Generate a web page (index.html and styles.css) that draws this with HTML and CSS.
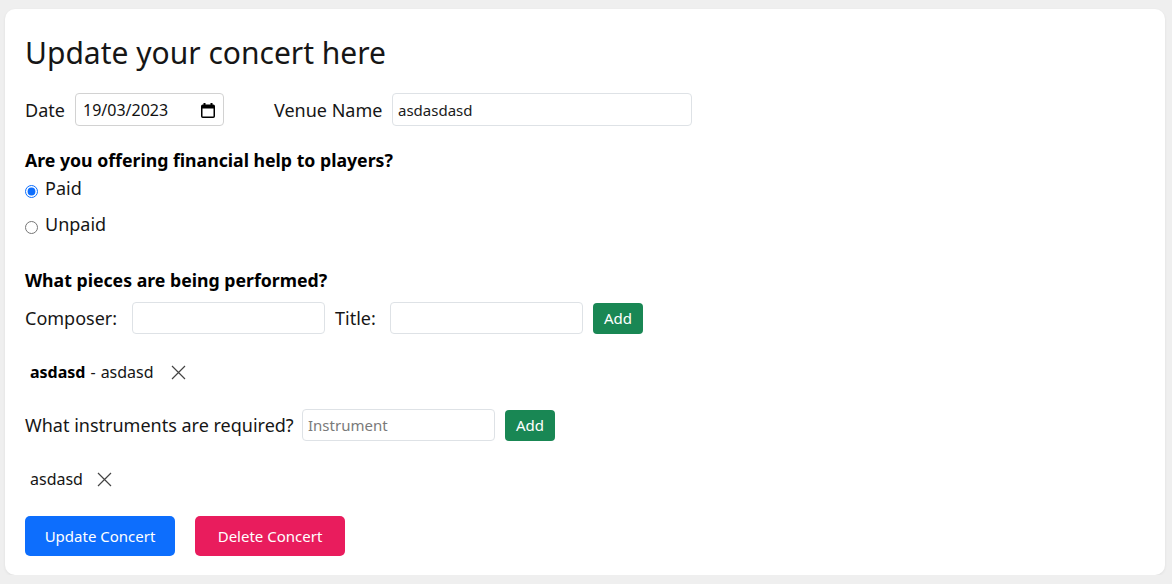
FILE: index.html
```html
<!DOCTYPE html>
<html lang="en">
<head>
<meta charset="utf-8">
<title>Update concert</title>
<link rel="stylesheet" href="styles.css">
</head>
<body>
<div class="card">
  <h2 class="title">Update your concert here</h2>
  <div class="row row-top">
    <label class="lbl lbl-date">Date</label>
    <div class="date-field">
      <input class="date-text" type="text" value="19/03/2023">
      <svg class="cal" width="14" height="15" viewBox="0 0 14 15" aria-hidden="true">
        <rect x="2.5" y="0" width="2" height="3" fill="#000"/>
        <rect x="9.5" y="0" width="2" height="3" fill="#000"/>
        <rect x="0.75" y="2.25" width="12.5" height="12" rx="1" fill="none" stroke="#000" stroke-width="1.5"/>
        <rect x="1" y="2.5" width="12" height="3" fill="#000"/>
      </svg>
    </div>
    <label class="lbl lbl-venue">Venue Name</label>
    <input class="field venue" type="text" value="asdasdasd">
  </div>

  <h5 class="q q1">Are you offering financial help to players?</h5>
  <label class="radio r1"><input type="radio" name="pay" checked><span>Paid</span></label>
  <label class="radio r2"><input type="radio" name="pay"><span>Unpaid</span></label>

  <h5 class="q q2">What pieces are being performed?</h5>
  <div class="row row-piece">
    <label class="lbl lbl-composer">Composer:</label>
    <input class="field w193" type="text">
    <label class="lbl lbl-title">Title:</label>
    <input class="field w193" type="text">
    <button class="btn-add">Add</button>
  </div>

  <div class="item item-piece">
    <span><b>asdasd</b><span class="sep">-</span>asdasd</span>
    <svg class="x" width="15" height="15" viewBox="0 0 15 15" aria-hidden="true"><path d="M1 1L14 14M14 1L1 14" stroke="#444" stroke-width="1.2" fill="none"/></svg>
  </div>

  <div class="row row-inst">
    <label class="lbl lbl-inst">What instruments are required?</label>
    <input class="field w193" type="text" placeholder="Instrument">
    <button class="btn-add">Add</button>
  </div>

  <div class="item item-inst">
    <span>asdasd</span>
    <svg class="x" width="15" height="15" viewBox="0 0 15 15" aria-hidden="true"><path d="M1 1L14 14M14 1L1 14" stroke="#444" stroke-width="1.2" fill="none"/></svg>
  </div>

  <div class="actions">
    <button class="btn btn-update">Update Concert</button>
    <button class="btn btn-delete">Delete Concert</button>
  </div>
</div>
</body>
</html>
```

FILE: styles.css
```css
html, body {
  margin: 0;
  padding: 0;
}
body {
  background: #efefef;
  font-family: "Noto Sans", "Open Sans", sans-serif;
  color: #161616;
}
.card {
  margin: 9px 0 0 5px;
  width: 1160px;
  height: 566px;
  box-sizing: border-box;
  padding: 26px 20px 0;
  background: #fff;
  border-radius: 10px;
  box-shadow: 0 1px 3px rgba(0, 0, 0, 0.07);
  display: flex;
  flex-direction: column;
  align-items: flex-start;
}
.title {
  margin: 0;
  font-size: 30px;
  font-weight: 400;
  line-height: 36px;
}
.row {
  display: flex;
  align-items: center;
}
.lbl {
  font-size: 18px;
  line-height: 24px;
  flex: none;
}
.row-top {
  margin-top: 22px;
  height: 33px;
}
.lbl-date { width: 50px; }
.date-field {
  width: 149px;
  height: 33px;
  box-sizing: border-box;
  border: 1px solid #d2d2d2;
  border-radius: 4px;
  display: flex;
  align-items: center;
  justify-content: space-between;
  padding: 0 8px 0 7px;
  margin-right: 50px;
}
.date-text {
  border: none;
  outline: none;
  padding: 0;
  width: 100px;
  font-family: inherit;
  font-size: 16px;
  color: #111;
  background: transparent;
}
.cal { flex: none; margin-top: 1px; }
.lbl-venue { width: 118px; }
.field {
  height: 33px;
  box-sizing: border-box;
  border: 1px solid #dee2e6;
  border-radius: 4px;
  padding: 0 5px;
  font-family: inherit;
  font-size: 15px;
  color: #1a1a1a;
  background: #fff;
  outline: none;
}
.field::placeholder { color: #7a7a7a; }
.venue { width: 300px; }
.q {
  margin: 0;
  font-size: 17.7px;
  font-weight: 700;
  line-height: 22px;
  color: #000;
}
.q1 { margin-top: 23px; }
.radio {
  display: flex;
  align-items: flex-start;
  font-size: 18px;
  line-height: 24px;
  height: 24px;
}
.radio input {
  margin: 9px 7px 0 0;
  width: 13px;
  height: 13px;
  accent-color: #0d6efd;
}
.r1 { margin-top: 5px; }
.r2 { margin-top: 12px; }
.q2 { margin-top: 33px; }
.row-piece {
  margin-top: 11px;
  height: 32px;
}
.lbl-composer { width: 107px; }
.w193 { width: 193px; height: 32px; }
.lbl-title { width: 55px; margin-left: 10px; }
.btn-add {
  margin-left: 10px;
  width: 50px;
  height: 31px;
  border: none;
  border-radius: 4px;
  background: #198754;
  color: #fff;
  font-family: inherit;
  font-size: 15px;
  padding: 0;
}
.item {
  display: flex;
  align-items: center;
  font-size: 16px;
  line-height: 24px;
  padding-left: 5px;
}
.item b { font-weight: 700; color: #000; }
.sep { margin: 0 5px; }
.x { margin-left: 14px; flex: none; }
.item-piece { margin-top: 26px; }
.item-piece .x { margin-left: 17px; }
.row-inst {
  margin-top: 25px;
  height: 32px;
}
.lbl-inst { width: 277px; }
.item-inst { margin-top: 26px; }
.actions {
  margin-top: 25px;
  display: flex;
  gap: 20px;
}
.btn {
  width: 150px;
  height: 40px;
  border: none;
  border-radius: 5px;
  color: #fff;
  font-family: inherit;
  font-size: 15px;
  padding: 0;
}
.btn-update { background: #0d6efd; }
.btn-delete { background: #e91c5d; }
```
